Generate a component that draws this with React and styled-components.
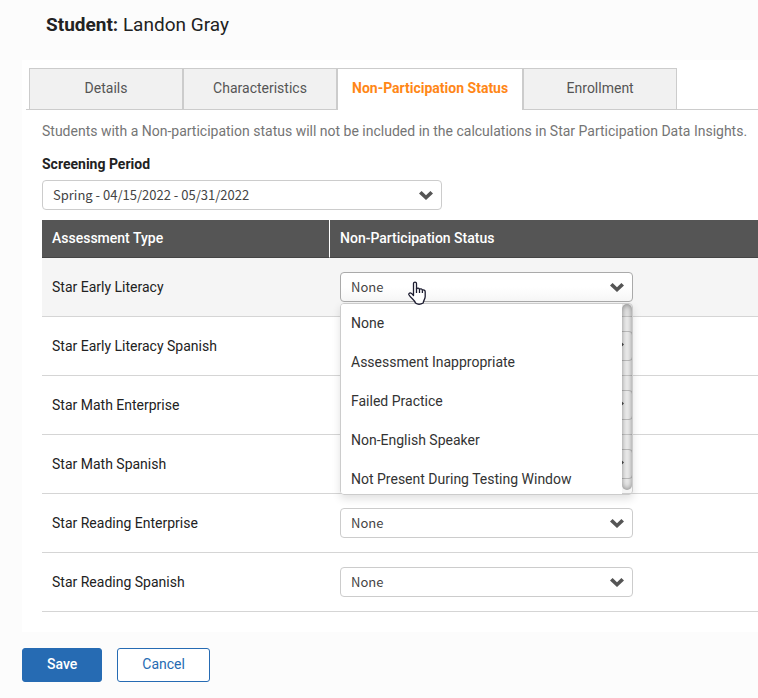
import React, { useState } from 'react'
import styled, { createGlobalStyle } from 'styled-components'

const GlobalStyle = createGlobalStyle`
  * {
    box-sizing: border-box;
  }
  body {
    margin: 0;
    background: #fcfcfc;
    color: #222;
    font-family: Roboto, 'Liberation Sans', sans-serif;
    font-size: 14px;
    line-height: 20px;
    overflow-x: hidden;
  }
`

const tabs = ['Details', 'Characteristics', 'Non-Participation Status', 'Enrollment']

const assessments = [
  'Star Early Literacy',
  'Star Early Literacy Spanish',
  'Star Math Enterprise',
  'Star Math Spanish',
  'Star Reading Enterprise',
  'Star Reading Spanish',
]

const statuses = [
  'None',
  'Assessment Inappropriate',
  'Failed Practice',
  'Non-English Speaker',
  'Not Present During Testing Window',
]

const Chevron = () => (
  <ChevronIcon viewBox="0 0 14 9" aria-hidden="true">
    <path d="M2.6 0 L7 4.2 L11.4 0 L14 2.4 L7 9 L0 2.4 Z" />
  </ChevronIcon>
)

const HandCursor = () => (
  <Hand viewBox="0 0 18 24" aria-hidden="true">
    <path d="M5.5 14.5V2.5C5.5 .6 8.5 .6 8.5 2.5V8C9 6.8 11.3 7 11.5 8.3C12.3 7.5 14.2 7.8 14.4 9.2C15.4 8.7 17.2 9 17.2 10.8V15.5C17.2 18 15.4 19.5 15.2 22C12.5 23.5 9.5 23.5 7.5 22C6.5 18.8 3 17.5 .9 13.8C.4 12.2 2.2 11.4 3.5 12.4Z" />
    <path d="M8.5 7.5V12M11.5 8.3V12M14.4 9.2V12" />
  </Hand>
)

const StatusSelect = ({ label, value, onChange, open, children }) => (
  <SelectBox>
    <Select aria-label={`${label} status`} value={value} onChange={onChange} $open={open}>
      {statuses.map((status) => (
        <option key={status}>{status}</option>
      ))}
    </Select>
    <Chevron />
    {children}
  </SelectBox>
)

const App = () => {
  const [activeTab, setActiveTab] = useState('Non-Participation Status')
  const [openRow, setOpenRow] = useState('Star Early Literacy')
  const [values, setValues] = useState({})

  const choose = (name, status) => {
    setValues({ ...values, [name]: status })
    setOpenRow(null)
  }

  return (
    <>
      <GlobalStyle />
      <Page>
        <Title>
          <strong>Student:</strong> Landon Gray
        </Title>
        <Card>
          <Tabs role="tablist">
            {tabs.map((tab) => (
              <Tab
                key={tab}
                role="tab"
                type="button"
                aria-selected={tab === activeTab}
                $active={tab === activeTab}
                onClick={() => setActiveTab(tab)}
              >
                {tab}
              </Tab>
            ))}
          </Tabs>
          <Panel>
            <Note>
              Students with a Non-participation status will not be included in the calculations in
              Star Participation Data Insights.
            </Note>
            <Label htmlFor="period">Screening Period</Label>
            <SelectBox $wide>
              <Select id="period">
                <option>Spring - 04/15/2022 - 05/31/2022</option>
              </Select>
              <Chevron />
            </SelectBox>
            <Table>
              <thead>
                <tr>
                  <HeadCell scope="col">Assessment Type</HeadCell>
                  <HeadCell scope="col">Non-Participation Status</HeadCell>
                </tr>
              </thead>
              <tbody>
                {assessments.map((name) => (
                  <Row key={name} $active={name === openRow}>
                    <Cell>{name}</Cell>
                    <Cell>
                      <StatusSelect
                        label={name}
                        value={values[name] || 'None'}
                        open={name === openRow}
                        onChange={(e) => choose(name, e.target.value)}
                      >
                        {name === openRow && (
                          <>
                            <Menu>
                              <MenuList>
                                {statuses.map((status) => (
                                  <li key={status}>
                                    <MenuItem type="button" onClick={() => choose(name, status)}>
                                      {status}
                                    </MenuItem>
                                  </li>
                                ))}
                              </MenuList>
                              <ScrollTrack>
                                <ScrollThumb />
                              </ScrollTrack>
                            </Menu>
                            <HandCursor />
                          </>
                        )}
                      </StatusSelect>
                    </Cell>
                  </Row>
                ))}
              </tbody>
            </Table>
          </Panel>
        </Card>
        <Actions>
          <Button type="button" $primary>
            Save
          </Button>
          <Button type="button">Cancel</Button>
        </Actions>
      </Page>
    </>
  )
}

export default App

const Page = styled.main`
  padding: 13px 0 16px 22px;
`

const Title = styled.h1`
  margin: 0;
  padding: 0 24px 23px;
  font-size: 19px;
  font-weight: 400;
  line-height: 24px;

  strong {
    font-weight: 700;
  }
`

const Card = styled.section`
  background: #fff;
  padding: 8px 0 20px 4px;
`

const Tabs = styled.div`
  display: flex;
  height: 42px;
  padding-left: 3px;
  border-bottom: 1px solid #ccc;
`

const Tab = styled.button`
  flex: none;
  height: ${(props) => (props.$active ? '42px' : '41px')};
  min-width: 154px;
  padding: 0 14px ${(props) => (props.$active ? '4px' : '2px')};
  border: 1px solid #ccc;
  border-bottom: 0;
  background: ${(props) => (props.$active ? '#fff' : '#f1f1f1')};
  color: ${(props) => (props.$active ? '#ff8717' : '#555')};
  font: inherit;
  font-weight: ${(props) => (props.$active ? 700 : 400)};
  cursor: pointer;
`

const Panel = styled.div`
  padding: 11px 0 0 16px;
`

const Note = styled.p`
  margin: 0 0 13px;
  color: #757575;
`

const Label = styled.label`
  display: block;
  margin-bottom: 6px;
  font-weight: 700;
`

const SelectBox = styled.div`
  position: relative;
  width: ${(props) => (props.$wide ? '400px' : '293px')};
  max-width: 100%;
`

const Select = styled.select`
  display: block;
  appearance: none;
  width: 100%;
  height: 30px;
  padding: 0 32px 2px 10px;
  border: 1px solid ${(props) => (props.$open ? '#aaa' : '#ccc')};
  border-radius: 4px;
  background: ${(props) => (props.$open ? 'linear-gradient(#fff 50%, #f6f6f6)' : '#fff')};
  color: #444;
  font-family: 'Noto Sans CJK SC', sans-serif;
  font-size: 13px;
`

const ChevronIcon = styled.svg`
  position: absolute;
  top: 11px;
  right: 9px;
  width: 14px;
  height: 9px;
  fill: #555;
  pointer-events: none;
`

const Table = styled.table`
  width: 100%;
  margin-top: 10px;
  border-collapse: separate;
  border-spacing: 0;
`

const HeadCell = styled.th`
  height: 38px;
  padding: 0 10px 2px;
  border-bottom: 1px solid #444;
  background: #555;
  color: #fff;
  font-weight: 500;
  text-align: left;

  &:first-child {
    width: 288px;
    border-right: 1px solid #fff;
  }
`

const Row = styled.tr`
  background: ${(props) => (props.$active ? '#f5f5f5' : '#fff')};
`

const Cell = styled.td`
  height: 59px;
  padding: 0 10px;
  border-bottom: 1px solid #d5d5d5;
`

const Menu = styled.div`
  position: absolute;
  z-index: 10;
  top: 31px;
  left: 0;
  right: 0;
  display: flex;
  height: 192px;
  border: 1px solid #ccc;
  border-radius: 4px;
  box-shadow: 0 4px 8px rgba(0, 0, 0, 0.12);
  overflow: hidden;
`

const MenuList = styled.ul`
  flex: 1;
  margin: 0;
  padding: 0;
  background: #fff;
  list-style: none;
`

const MenuItem = styled.button`
  display: block;
  width: 100%;
  height: 39px;
  padding: 0 10px 2px;
  border: 0;
  background: none;
  color: #333;
  font: inherit;
  text-align: left;
  cursor: pointer;
`

const ScrollTrack = styled.div`
  width: 10px;
  background: rgba(0, 0, 0, 0.04);
`

const ScrollThumb = styled.div`
  height: 186px;
  border-radius: 5px;
  box-shadow: inset 0 0 6px rgba(0, 0, 0, 0.5);
`

const Hand = styled.svg`
  position: absolute;
  z-index: 11;
  top: 9px;
  left: 68px;
  width: 18px;
  height: 24px;
  fill: #fff;
  stroke: #1c1c30;
  stroke-width: 1.3;
  stroke-linejoin: round;
  pointer-events: none;
`

const Actions = styled.div`
  display: flex;
  gap: 15px;
  padding-top: 16px;
`

const Button = styled.button`
  height: 34px;
  padding: 0 24px 2px;
  border: 1px solid #266bb3;
  border-radius: 3px;
  background: ${(props) => (props.$primary ? '#266bb3' : '#fff')};
  color: ${(props) => (props.$primary ? '#fff' : '#266bb3')};
  font: inherit;
  font-weight: ${(props) => (props.$primary ? 500 : 400)};
  cursor: pointer;
`
